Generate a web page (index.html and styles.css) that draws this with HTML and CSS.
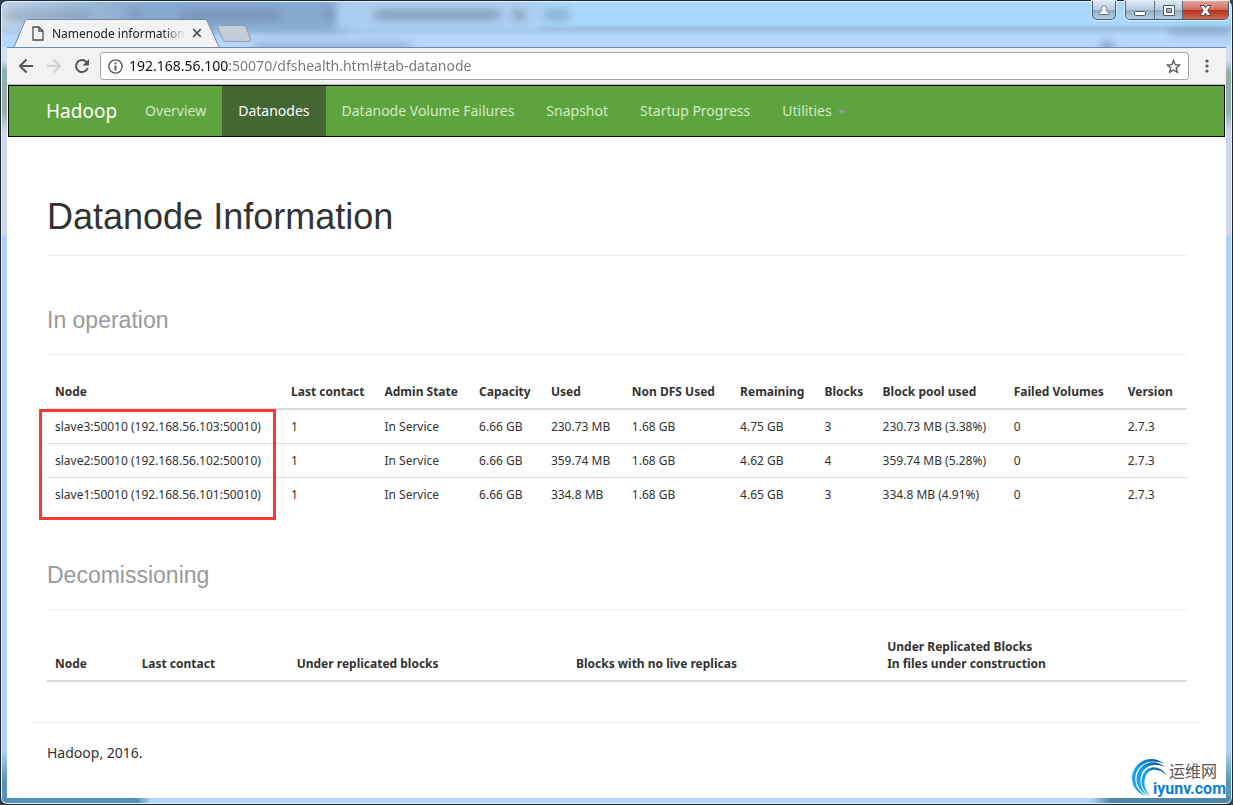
FILE: index.html
```html
<!DOCTYPE html>
<html lang="en">
<head>
<meta charset="utf-8">
<title>Namenode information</title>
<link rel="stylesheet" href="styles.css">
</head>
<body>
<div class="window">
  <header class="titlebar">
    <div class="glass" aria-hidden="true">
      <span class="ghost-tab ghost-dark"></span>
      <span class="ghost-tab ghost-light"></span>
      <span class="ghost-smudge smudge-a"></span>
      <span class="ghost-smudge smudge-b"></span>
      <span class="ghost-smudge smudge-c"></span>
      <span class="ghost-smudge smudge-d"></span>
      <span class="ghost-smudge smudge-e"></span>
      <span class="ghost-smudge smudge-f"></span>
      <span class="ghost-smudge smudge-g"></span>
      <span class="ghost-smudge smudge-h"></span>
      <span class="ghost-smudge smudge-i"></span>
      <span class="ghost-smudge smudge-j"></span>
    </div>
    <div class="tab">
      <svg class="tab-shape" viewBox="0 0 212 29" preserveAspectRatio="none"><path d="M-6 28.500H0L11 2Q11.600 .5 13 .5H191Q192.500 .5 193.200 2L204.500 27Q205.200 28.500 207 28.500V29H-6Z" fill="#f2f2f2"/><path d="M-6 28.500H-1Q0 28.500 .5 27L11 2Q11.600 .5 13 .5H191Q192.500 .5 193.200 2L204.500 27Q205.200 28.500 207 28.500H212" fill="none" stroke="#7089ac"/></svg>
      <svg class="tab-icon" width="12" height="15" viewBox="0 0 12 15" fill="none" stroke="#4c4c4c" stroke-width="1.300"><path d="M1 1H7L11 5V14H1ZM7 1V5H11"/></svg>
      <span class="tab-title">Namenode information</span>
      <button class="tab-close" aria-label="Close tab"><svg width="10" height="10" viewBox="0 0 10 10" stroke="#555" stroke-width="1.800"><path d="M1.200 1.200 8.800 8.800M8.800 1.200 1.200 8.800"/></svg></button>
    </div>
    <button class="new-tab" aria-label="New tab"><svg width="35" height="18" viewBox="0 0 35 18"><path d="M2.500 .5H26Q28 .5 29 2.500L33.500 14Q34 16.500 32 16.500H9Q7 16.500 6 14.500L1 3Q0 .5 2.500 .5Z" fill="#c5cdd8" stroke="#8b9db6"/></svg></button>
    <div class="window-controls">
      <button class="control user" aria-label="User"><svg width="12" height="12" viewBox="0 0 12 12" fill="#fff" stroke="#6d7d90"><path d="M1.500 10.500V9Q2 7 4.200 6.500A2.700 2.700 0 1 1 7.800 6.500Q10 7 10.500 9V10.500Z"/></svg></button>
      <div class="control-group">
        <button class="control" aria-label="Minimize"><svg width="13" height="11" viewBox="0 0 13 11"><rect x=".5" y="6.500" width="11" height="4" rx="1" fill="#fff" stroke="#4d5a6a"/></svg></button>
        <button class="control" aria-label="Maximize"><svg width="12" height="11" viewBox="0 0 12 11"><path d="M.5 .5H11.500V10.500H.5ZM3.500 3.500V7.500H8.500V3.500Z" fill="#fff" fill-rule="evenodd" stroke="#4d5a6a"/></svg></button>
        <button class="control close" aria-label="Close"><svg width="13" height="11" viewBox="0 0 13 11"><path d="M1 .5H4.500L6.500 2.800 8.500 .5H12L8.800 5.500 12 10.500H8.500L6.500 8.200 4.500 10.500H1L4.200 5.500Z" fill="#fff" stroke="#59464e"/></svg></button>
      </div>
    </div>
  </header>

  <div class="client">
    <div class="toolbar">
      <button class="tool" aria-label="Back"><svg width="16" height="16" viewBox="0 0 16 16" fill="none" stroke="#555" stroke-width="2"><path d="M15 8H2.500M8.500 1.500 2 8l6.500 6.500"/></svg></button>
      <button class="tool" aria-label="Forward" disabled><svg width="16" height="16" viewBox="0 0 16 16" fill="none" stroke="#d0d0d0" stroke-width="2"><path d="M1 8H13.500M7.500 1.500 14 8l-6.500 6.500"/></svg></button>
      <button class="tool" aria-label="Reload"><svg width="16" height="16" viewBox="0 0 16 16"><path d="M12.500 4A6 6 0 1 0 13.700 10" fill="none" stroke="#555" stroke-width="2"/><path d="M15 1V7.500H8.500Z" fill="#555"/></svg></button>
      <div class="omnibox">
        <svg width="15" height="15" viewBox="0 0 15 15"><circle cx="7.500" cy="7.500" r="6.600" fill="none" stroke="#555" stroke-width="1.400"/><path d="M6.600 3.500H8.400V5.200H6.600ZM6.600 6.500H8.400V11.500H6.600Z" fill="#555"/></svg>
        <input class="url" type="text" aria-label="Address" value="192.168.56.100:50070/dfshealth.html#tab-datanode">
        <button class="star" aria-label="Bookmark"><svg width="15" height="15" viewBox="0 0 15 15"><path d="M7.500 1.500 9.200 5.700 13.700 6 10.200 8.900 11.400 13.300 7.500 10.900 3.600 13.300 4.800 8.900 1.300 6 5.800 5.700Z" fill="none" stroke="#555" stroke-width="1.300"/></svg></button>
      </div>
      <button class="tool" aria-label="Menu"><svg width="4" height="14" viewBox="0 0 4 14" fill="#555"><circle cx="2" cy="2" r="1.600"/><circle cx="2" cy="7" r="1.600"/><circle cx="2" cy="12" r="1.600"/></svg></button>
    </div>

    <nav class="navbar">
      <a class="brand" href="#">Hadoop</a>
      <a class="nav-link" href="#tab-overview">Overview</a>
      <a class="nav-link active" href="#tab-datanode">Datanodes</a>
      <a class="nav-link" href="#tab-datanode-volume-failures">Datanode Volume Failures</a>
      <a class="nav-link" href="#tab-snapshot">Snapshot</a>
      <a class="nav-link" href="#tab-startup-progress">Startup Progress</a>
      <a class="nav-link" href="#utilities">Utilities<span class="caret"></span></a>
    </nav>

    <main class="content">
      <h1 class="page-title">Datanode Information</h1>
      <h2 class="section-title">In operation</h2>
      <div class="table-wrap">
        <table class="table operation">
          <colgroup><col class="w-node"><col class="w-contact"><col class="w-state"><col class="w-capacity"><col class="w-used"><col class="w-nondfs"><col class="w-remaining"><col class="w-blocks"><col class="w-pool"><col class="w-failed"><col class="w-version"></colgroup>
          <thead><tr><th>Node</th><th>Last contact</th><th>Admin State</th><th>Capacity</th><th>Used</th><th>Non DFS Used</th><th>Remaining</th><th>Blocks</th><th>Block pool used</th><th>Failed Volumes</th><th>Version</th></tr></thead>
          <tbody>
            <tr><td>slave3:50010 (192.168.56.103:50010)</td><td>1</td><td>In Service</td><td>6.66 GB</td><td>230.73 MB</td><td>1.68 GB</td><td>4.75 GB</td><td>3</td><td>230.73 MB (3.38%)</td><td>0</td><td>2.7.3</td></tr>
            <tr><td>slave2:50010 (192.168.56.102:50010)</td><td>1</td><td>In Service</td><td>6.66 GB</td><td>359.74 MB</td><td>1.68 GB</td><td>4.62 GB</td><td>4</td><td>359.74 MB (5.28%)</td><td>0</td><td>2.7.3</td></tr>
            <tr><td>slave1:50010 (192.168.56.101:50010)</td><td>1</td><td>In Service</td><td>6.66 GB</td><td>334.8 MB</td><td>1.68 GB</td><td>4.65 GB</td><td>3</td><td>334.8 MB (4.91%)</td><td>0</td><td>2.7.3</td></tr>
          </tbody>
        </table>
        <div class="highlight"></div>
      </div>
      <h2 class="section-title">Decomissioning</h2>
      <table class="table">
        <colgroup><col class="d-node"><col class="d-contact"><col class="d-under"><col class="d-live"><col class="d-files"></colgroup>
        <thead><tr><th>Node</th><th>Last contact</th><th>Under replicated blocks</th><th>Blocks with no live replicas</th><th>Under Replicated Blocks<br>In files under construction</th></tr></thead>
      </table>
    </main>
    <footer class="footer">Hadoop, 2016.</footer>

    <div class="watermark">
      <svg width="40" height="40" viewBox="0 0 40 40">
        <defs><linearGradient id="swirl" x1="0" y1="1" x2="1" y2="0"><stop offset="0" stop-color="#1aa5ee"/><stop offset=".5" stop-color="#12a0ea"/><stop offset="1" stop-color="#0b3f86"/></linearGradient></defs>
        <path d="M15 38C3 34-2 23 3 12C8 1 23-3 33 6C22 1 11 4 6 13C2 22 5 32 15 38Z" fill="url(#swirl)"/>
        <path d="M17 38C7 32 3 23 7 14C12 3 25 1 34 9C25 5 15 7 11 15C8 22 9 31 17 38Z" fill="url(#swirl)"/>
        <path d="M20 39C12 33 8 25 12 17C16 7 29 6 36 18C29 10 19 10 15 17C12 24 13 32 20 39Z" fill="url(#swirl)"/>
      </svg>
      <div class="watermark-text"><span class="watermark-name" lang="zh">运维网</span><span class="watermark-site">iyunv.com</span></div>
    </div>
  </div>
</div>
</body>
</html>
```
FILE: styles.css
```css
* { box-sizing: border-box; }
body {
  margin: 0;
  background: #33414f;
  color: #333;
  font-family: "Noto Sans", "Open Sans", "Noto Sans CJK SC", sans-serif;
}
button { border: 0; padding: 0; background: none; display: flex; align-items: center; justify-content: center; }
svg { display: block; flex: none; }
a { text-decoration: none; }

.window {
  min-height: 100vh;
  display: flex;
  flex-direction: column;
  padding: 0 6px 6px;
  border: 1px solid #1d2633;
  border-radius: 7px;
  background:
    linear-gradient(90deg, #5590b8 0 136px, #b5d6fa 150px 1090px, #5087a8 1110px) bottom / 100% 7px no-repeat,
    linear-gradient(#cfe0f2 0, #cfe0f2 60px, #8fb0a8 70px 110px, #cbd8ea 130px 234px, #acd0f8 236px 750px, #5793ba 780px);
  box-shadow: inset 0 0 0 1px #e4f1ff;
}

.titlebar {
  position: relative;
  height: 46px;
  display: flex;
  align-items: flex-end;
}
.glass {
  position: absolute;
  inset: 1px -5px 0;
  overflow: hidden;
  border-radius: 6px 6px 0 0;
  background: linear-gradient(#a9d8fa 0 22px, #9dc0e2 27px, #b7d8fd 34px);
}
.ghost-tab { position: absolute; top: -6px; filter: blur(4px); }
.ghost-dark { left: -10px; width: 356px; height: 36px; background: linear-gradient(90deg, #c2d4ea, #86a9cd 150px); }
.ghost-light { left: 334px; width: 206px; height: 35px; background: #abcdf0; }
.ghost-smudge { position: absolute; height: 8px; border-radius: 4px; background: #4d6076; opacity: .3; filter: blur(4px); }
.smudge-a { top: 9px; left: 4px; width: 84px; }
.smudge-b { top: 9px; left: 178px; width: 100px; }
.smudge-c { top: 9px; left: 372px; width: 126px; opacity: .5; }
.smudge-d { top: 9px; left: 512px; width: 10px; opacity: .6; }
.smudge-e { top: 7px; left: 542px; width: 26px; height: 12px; }
.smudge-f { top: 40px; left: 250px; width: 160px; }
.smudge-g { top: 40px; right: 118px; width: 12px; opacity: .6; }
.smudge-h { top: 26px; right: 0; width: 62px; }
.smudge-i { top: 9px; left: 128px; width: 10px; }
.smudge-j { top: 9px; left: 322px; width: 10px; }

.tab {
  position: relative;
  margin-left: 7px;
  width: 212px;
  height: 28px;
  display: flex;
  align-items: center;
  gap: 8px;
  padding: 0 24px 0 18px;
  font-size: 12px;
  color: #222;
}
.tab-shape { position: absolute; inset: 0 0 -1px; width: 100%; height: 29px; overflow: visible; }
.tab-icon, .tab-title, .tab-close { position: relative; }
.tab-title {
  flex: 1;
  overflow: hidden;
  white-space: nowrap;
  mask-image: linear-gradient(90deg, #000 110px, transparent 134px);
}
.new-tab { position: relative; margin-left: -9px; padding-bottom: 4px; }

.window-controls { position: relative; align-self: flex-start; display: flex; gap: 9px; margin-left: auto; margin-right: -3px; }
.control {
  width: 28px;
  height: 18px;
  background: linear-gradient(#dce8f3, #b8cadd 50%, #8fabc6 50%, #b2cfe6);
}
.control + .control { border-left: 1px solid #5c6d82; }
.user, .control-group {
  border: 1px solid #47576c;
  border-top: 0;
  border-radius: 0 0 5px 5px;
  box-shadow: 0 0 0 1px #e1effd;
  overflow: hidden;
}
.user { width: 24px; height: 19px; }
.control-group { display: flex; }
.control.close { width: 46px; background: linear-gradient(#e6a699, #cd6d5a 50%, #b32f1c 50%, #d06a4c); }

.client {
  position: relative;
  flex: 1;
  display: flex;
  flex-direction: column;
  background: #fff;
  border-top: 1px solid #7089ac;
}
.toolbar {
  display: flex;
  align-items: center;
  gap: 4px;
  height: 37px;
  padding: 0 7px;
  background: #f2f2f2;
  border-bottom: 1px solid #b6b4b6;
}
.tool { width: 24px; height: 24px; }
.omnibox {
  flex: 1;
  height: 28px;
  display: flex;
  align-items: center;
  gap: 6px;
  margin: 0 2px;
  padding: 0 7px;
  border: 1px solid #a6a6a6;
  border-radius: 3px;
  background: #fff;
}
.url {
  flex: 1;
  min-width: 0;
  border: 0;
  padding: 0;
  outline: 0;
  font: 14px/20px "Noto Sans", "Open Sans", sans-serif;
  color: transparent;
  background: linear-gradient(90deg, #111 100px, #777 100px);
  background-clip: text;
  -webkit-background-clip: text;
}

.navbar {
  display: flex;
  margin: 0 1px;
  padding-left: 22px;
  border: 1px solid #080808;
  background: #5fa33e;
  font-size: 14px;
  line-height: 20px;
}
.brand { padding: 15px 12px 15px 15px; font-size: 19px; color: #fff; }
.nav-link { padding: 15px 16px; color: #cfeec0; white-space: nowrap; }
.nav-link.active { color: #fff; background: #446633; }
.caret {
  display: inline-block;
  margin-left: 6px;
  vertical-align: middle;
  border: 4px solid transparent;
  border-top-color: #999;
  border-bottom: 0;
}

.content { padding: 60px 39px 0 40px; }
.page-title, .section-title { margin: 0; font-family: "Liberation Sans", Arial, sans-serif; font-weight: 400; border-bottom: 1px solid #eee; }
.page-title { padding-bottom: 18px; font-size: 36px; line-height: 40px; }
.section-title { margin: 50px 0 20px; padding-bottom: 20px; font-size: 23px; line-height: 28px; color: #999; }
.table-wrap { position: relative; }
.table { width: 100%; table-layout: fixed; border-collapse: collapse; font-size: 12px; line-height: 17px; }
.table th, .table td { padding: 8px; text-align: left; white-space: nowrap; }
.table th { vertical-align: bottom; border-bottom: 2px solid #ddd; font-weight: 700; }
.table td { border-top: 1px solid #ddd; }
.w-node { width: 20.7%; }
.w-contact { width: 8.2%; }
.w-state { width: 8.3%; }
.w-capacity { width: 6.3%; }
.w-used { width: 7.1%; }
.w-nondfs { width: 9.5%; }
.w-remaining { width: 7.4%; }
.w-blocks { width: 5.1%; }
.w-pool { width: 11.5%; }
.w-failed { width: 10%; }
.w-version { width: 5.9%; }
.d-node { width: 7.6%; }
.d-contact { width: 13.6%; }
.d-under { width: 24.5%; }
.d-live { width: 27.3%; }
.d-files { width: 27%; }
.highlight { position: absolute; left: -8px; top: 34px; width: 237px; height: 111px; border: 3px solid #f73838; }

.footer {
  margin: 40px 24px 0 25px;
  padding: 20px 15px 34px;
  border-top: 1px solid #eee;
  font-size: 14px;
  line-height: 20px;
}

.watermark { position: absolute; right: 0; bottom: 0; display: flex; align-items: flex-end; }
.watermark svg { margin-right: -18px; }
.watermark-text { position: relative; display: flex; flex-direction: column; align-items: flex-end; }
.watermark-name { margin-right: 9px; font: 16px/20px "Noto Sans CJK SC", sans-serif; color: #555; }
.watermark-site { font: 700 16px/18px Roboto, "Liberation Sans", sans-serif; color: #0b80d8; }
```
